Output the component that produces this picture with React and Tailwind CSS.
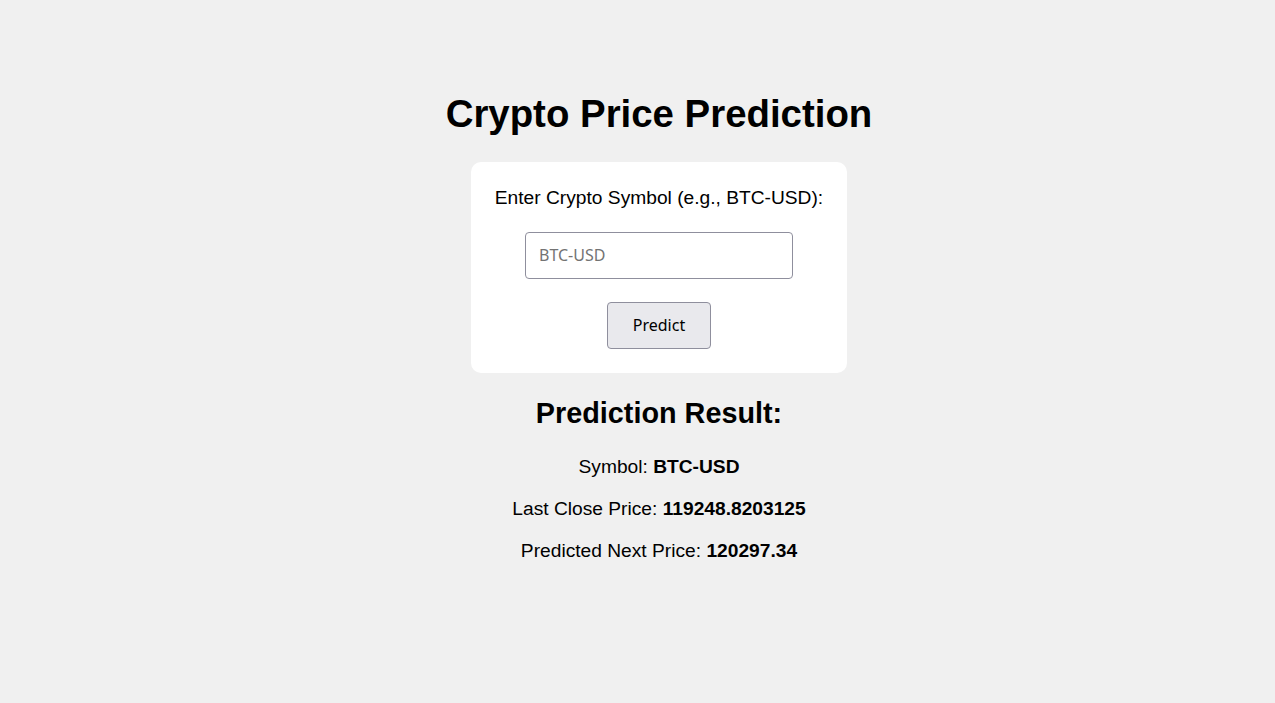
import { useState } from "react";

const App = () => {
  const [symbol, setSymbol] = useState("");

  return (
    <div
      className="min-h-[703px] w-full bg-[#f0f0f0] pl-[43px] pt-[92px] text-center text-black"
      style={{ fontFamily: '"Liberation Sans", Arial, sans-serif' }}
    >
      <h1 className="mb-[26px] text-[38.4px] leading-[44px] font-bold">Crypto Price Prediction</h1>

      <div className="mx-auto flex w-[376px] flex-col items-center rounded-[10px] bg-white p-[24px]">
        <label htmlFor="symbol" className="mt-[1px] mb-[23px] block whitespace-nowrap text-[19.2px] leading-[22px]">
          Enter Crypto Symbol (e.g., BTC-USD):
        </label>
        <input
          id="symbol"
          type="text"
          value={symbol}
          onChange={(e) => setSymbol(e.target.value)}
          placeholder="BTC-USD"
          className="mb-[23px] h-[47px] w-[268px] rounded-[4px] border border-[#8f8f9d] bg-white px-[13px] pb-[2px] text-[16px] text-black outline-none placeholder:text-[#737373]"
          style={{ fontFamily: '"Noto Sans", sans-serif' }}
        />
        <button
          className="h-[47px] w-[104px] rounded-[4px] border border-[#8f8f9d] bg-[#e9e9ed] pb-[2px] text-[16px] text-black hover:bg-[#d0d0d7]"
          style={{ fontFamily: '"Noto Sans", sans-serif' }}
        >
          Predict
        </button>
      </div>

      <h2 className="mt-[24px] mb-[26px] text-[28.8px] leading-[33px] font-bold">Prediction Result:</h2>
      <div className="flex flex-col gap-[20px] text-[19.2px] leading-[22px]">
        <p>
          Symbol: <strong>BTC-USD</strong>
        </p>
        <p>
          Last Close Price: <strong>119248.8203125</strong>
        </p>
        <p>
          Predicted Next Price: <strong>120297.34</strong>
        </p>
      </div>
    </div>
  );
};

export default App;
